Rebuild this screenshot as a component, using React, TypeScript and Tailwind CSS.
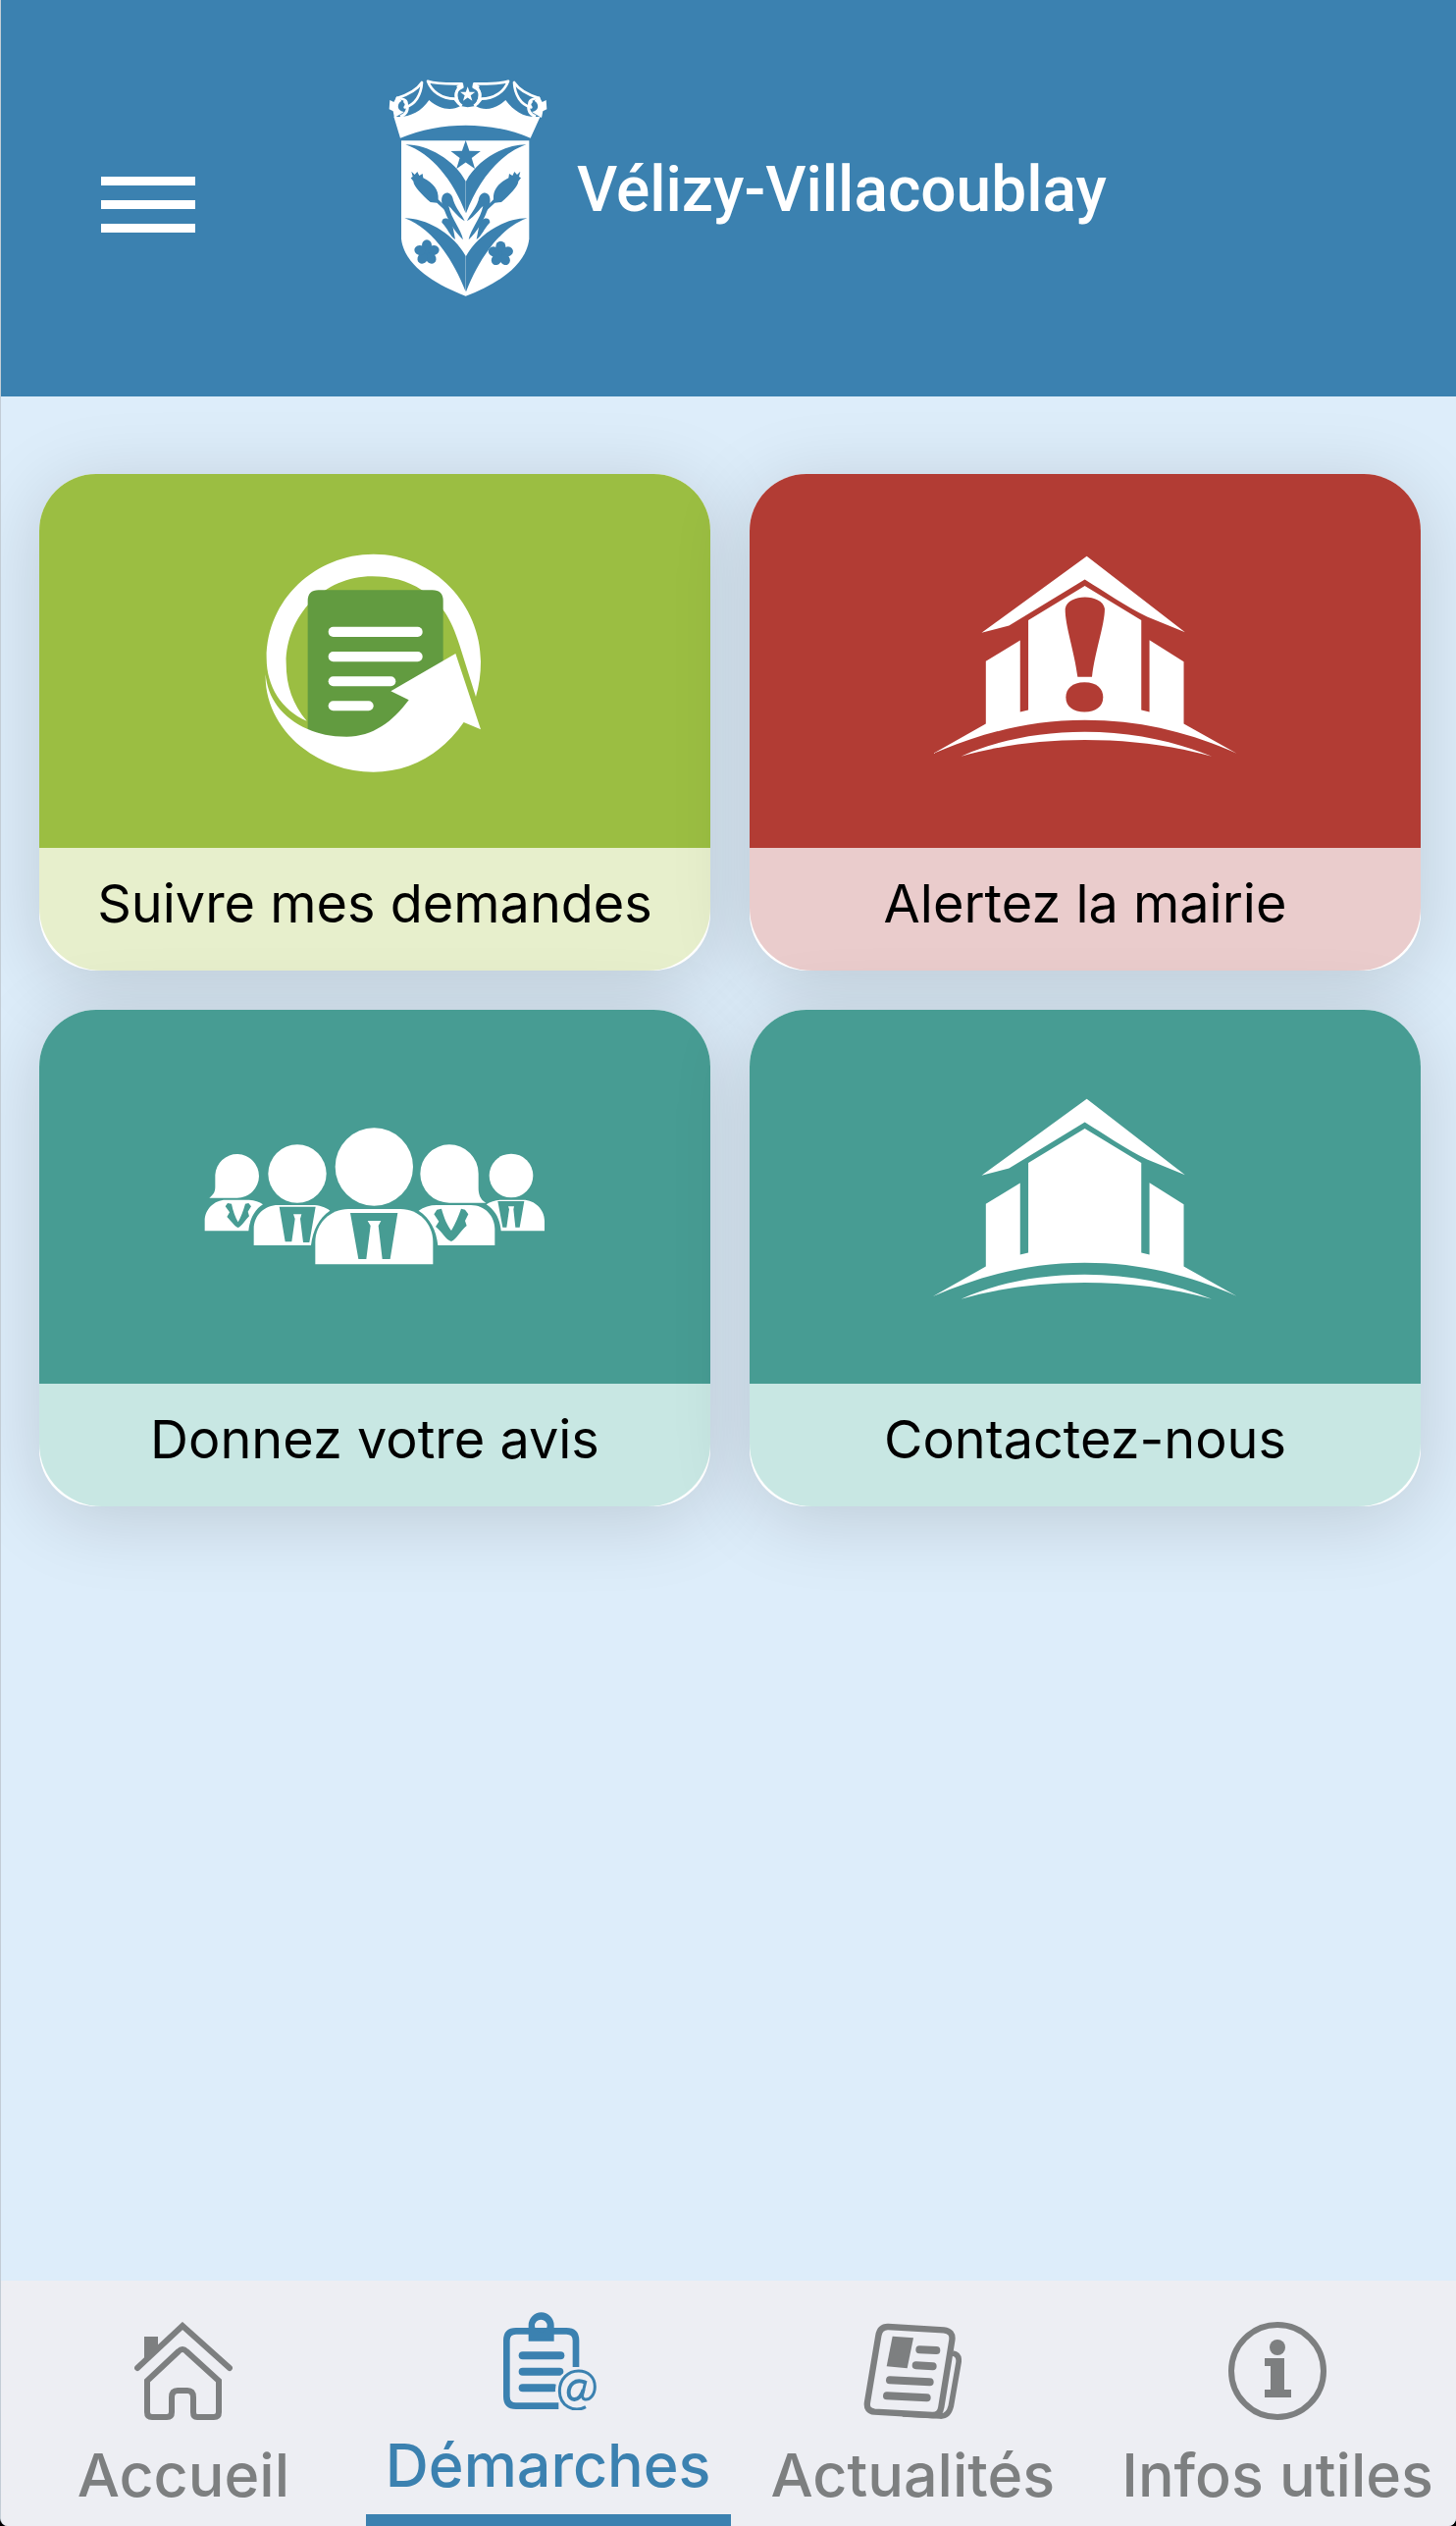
import React from "react";

function CityCrest() {
  const star = (cx: number, cy: number, r: number) =>
    Array.from({ length: 10 }, (_, i) => {
      const a = -Math.PI / 2 + (i * Math.PI) / 5;
      const k = i % 2 ? r * 0.4 : r;
      return `${cx + k * Math.cos(a)},${cy + k * Math.sin(a)}`;
    }).join(" ");
  const petals = [0, 72, 144, 216, 288];
  const half = (
    <>
      <path d="M168 68 C200 78 235 76 272 76 L274 86 C250 96 250 110 262 136 L250 122 C210 122 180 100 168 68Z" fill="none" stroke="white" strokeWidth="8" strokeLinejoin="round" />
      <path d="M272 78 C248 100 250 128 272 144 M272 78 L258 88" fill="none" stroke="white" strokeWidth="9" />
      <path d="M150 72 C148 110 130 140 98 148 C110 132 102 122 74 120 C100 112 135 95 150 72Z" fill="none" stroke="white" strokeWidth="8" strokeLinejoin="round" />
      <path d="M52 126 L64 132 L74 114 L88 128 C70 140 76 160 96 162 L66 180 L62 160 L50 154Z" fill="white" />
      <path d="M96 128 C112 146 108 168 84 176" fill="none" stroke="white" strokeWidth="9" />
    </>
  );
  const plant = (
    <>
      <path d="M100 262 C170 262 250 310 284 374 V472 C245 370 180 290 100 262Z" />
      <path d="M97 487 C170 487 250 540 284 603 V712 C240 600 175 515 97 487Z" />
      <path d="M118 344 L128 354 L136 345 L142 357 L152 351 L154 364 C185 380 202 400 200 430 L228 458 L222 464 L196 440 L176 438 C150 415 125 390 124 374 L116 364 L122 360Z" />
      <path d="M211 440 C205 405 240 398 246 432 C255 460 272 475 281 496 C255 480 240 455 232 450 C240 490 270 520 276 553 C250 525 230 500 211 440Z" />
      <path d="M211 500 C210 482 238 482 244 510 L252 552 C235 540 230 520 211 500Z" />
    </>
  );
  return (
    <svg viewBox="0 0 600 780" className="h-[260px] w-[200px] shrink-0" aria-hidden="true">
      {half}
      <g transform="translate(582 0) scale(-1 1)">{half}</g>
      <polygon points={star(290, 109, 24)} fill="white" />
      <path d="M64 176 C110 180 145 165 172 126 C205 155 240 160 268 144 L290 148 L314 144 C340 160 375 155 406 126 C435 165 470 182 512 176 L482 242 C360 190 210 190 84 242Z" fill="white" />
      <path d="M87 250 H478 V550 C470 630 380 690 284 725 C190 690 95 630 87 550Z" fill="white" />
      <g fill="#3b81b0">
        {plant}
        <g transform="translate(569 0) scale(-1 1)">{plant}</g>
        <polygon points={star(284, 297, 48)} />
        {[{ x: 165, y: 592 }, { x: 391, y: 596 }].map((f) => (
          <g key={f.x} transform={`translate(${f.x} ${f.y})`}>
            <circle r="13" />
            {petals.map((p) => (
              <ellipse key={p} cx="0" cy="-22" rx="15" ry="17" transform={`rotate(${p})`} />
            ))}
          </g>
        ))}
      </g>
    </svg>
  );
}

function FollowIcon() {
  return (
    <svg viewBox="36 40 720 720" className="size-[240px]" aria-hidden="true">
      <path fill="white" d="M188 582 C110 548 65 475 65 390 C65 210 215 72 392 72 C580 72 720 230 720 400 C720 440 715 475 705 508 L655 350 C630 270 600 220 540 182 C495 153 445 140 388 140 C240 140 125 260 125 405 C125 475 145 530 188 582Z" />
      <path fill="#629b40" d="M191 615 V215 Q191 182 224 182 H572 Q605 182 605 215 V405 L510 530 C440 640 300 660 191 615Z" />
      <g fill="white">
        <rect x="254" y="294" width="288" height="31" rx="15" />
        <rect x="254" y="370" width="288" height="31" rx="15" />
        <rect x="254" y="446" width="206" height="30" rx="15" />
        <rect x="254" y="521" width="138" height="30" rx="15" />
        <path d="M62 440 C68 510 110 572 191 607 C225 622 260 630 310 630 C390 630 450 585 500 518 L445 491 L643 376 L720 608 L668 586 C600 685 500 738 392 738 C210 738 58 600 62 440Z" />
      </g>
    </svg>
  );
}

function TownHallIcon({ alert = false }: { alert?: boolean }) {
  return (
    <svg viewBox={alert ? "48 50 960 700" : "48 29 960 700"} className="h-[233px] w-[320px]" aria-hidden="true">
      <g fill="white">
        <path d="M533 79 L834 312 L718 265 C650 232 590 190 527 151 L295 292 L211 314Z" />
        <path d="M527 170 L700 275 V550 L725 556 V336 L830 402 V592 L992 683 C850 620 700 581 527 581 C350 581 200 625 62 684 L224 592 V401 L329 337 V556 L354 550 V275Z" />
        <path d="M148 692 C260 642 390 617 527 617 C670 617 800 645 916 692 C790 658 660 642 527 642 C390 642 260 660 148 692Z" />
      </g>
      {alert && (
        <g fill="#b23c34">
          <path d="M505 449 C495 370 466 290 467 240 C475 193 580 193 588 240 C588 290 558 370 549 449Z" />
          <path d="M526 465 C565 465 583 485 583 511 C583 540 560 556 526 556 C492 556 469 540 469 511 C469 485 488 465 526 465Z" />
        </g>
      )}
    </svg>
  );
}

function PeopleIcon() {
  const c = "#479c93";
  return (
    <svg viewBox="36 73 1080 450" className="h-[150px] w-[360px]" aria-hidden="true">
      <g fill="white">
        <path d="M88 230 A67 67 0 1 1 155 300 H70 C85 288 88 280 88 265Z" />
        <circle cx="339" cy="226" r="89" />
        <circle cx="574" cy="205" r="119" />
        <path d="M893 226 A89 89 0 1 0 805 315 H916 C897 305 893 285 893 270Z" />
        <circle cx="993" cy="232" r="67" />
        <path d="M56 401 V370 C56 335 85 306 120 306 H185 C205 306 222 311 234 320 C210 335 194 362 190 401Z" />
        <path d="M206 445 V395 C206 352 240 322 280 322 H385 C405 322 425 328 439 339 C405 362 387 398 381 445Z" />
        <path d="M394 503 V435 C394 378 440 334 495 334 H655 C710 334 754 378 754 435 V503Z" />
        <path d="M710 339 C725 328 745 322 765 322 H870 C912 322 943 355 943 395 V445 H769 C764 398 745 362 710 339Z" />
        <path d="M917 320 C930 311 945 306 965 306 H1030 C1065 306 1095 335 1095 370 V401 H962 C958 362 944 338 917 320Z" />
      </g>
      <g fill={c}>
        <path d="M501 346 H646 L623 487 H599 L587 385 L595 370 H554 L563 385 L550 487 H526Z" />
        <path d="M284 327 H395 L376 436 H357 L348 364 L352 350 H327 L332 364 L322 434 H302Z" />
        <path d="M952 310 H1033 L1019 390 H1006 L1000 335 L1002 326 H984 L987 335 L979 390 H967Z" />
        <path d="M126 316 L138 318 C142 340 150 360 158 374 C166 360 174 340 180 318 L190 316 L198 326 L188 342 L192 356 C178 370 170 386 158 391 C146 386 138 372 124 358 L132 344 L119 326Z" />
        <path d="M766 336 L780 333 C788 362 798 385 810 400 C822 380 832 355 840 333 L852 336 L862 350 L852 370 L857 385 C838 400 828 424 810 433 C792 428 784 405 762 388 L772 372 L757 350Z" />
      </g>
    </svg>
  );
}

function HomeIcon() {
  return (
    <svg viewBox="0 0 100 100" className="size-[100px]" fill="none" stroke="currentColor" aria-hidden="true">
      <path d="M3 47 L49 4 L97 47" strokeWidth="6" strokeLinecap="round" />
      <path d="M10 15 H24 V26 L10 39Z" fill="currentColor" stroke="none" />
      <path d="M49 28 Q51 28 53 30 L86 60 V92 Q86 97 81 97 H64 Q60 97 60 92 V77 Q60 70 54 70 H44 Q38 70 38 77 V92 Q38 97 33 97 H18 Q13 97 13 92 V60 L45 30 Q47 28 49 28Z" strokeWidth="6" />
    </svg>
  );
}

function ClipboardIcon() {
  return (
    <svg viewBox="84 48 300 300" className="size-[100px]" fill="none" stroke="currentColor" aria-hidden="true">
      <path d="M265 335 H135 Q106 335 106 306 V135 Q106 106 135 106 H289 Q318 106 318 135 V216" strokeWidth="20" />
      <path fillRule="evenodd" fill="currentColor" stroke="none" d="M173 137 V88 A39 39 0 0 1 251 88 V137Z M211 71 A19 19 0 1 0 211 109 A19 19 0 1 0 211 71Z" />
      <g strokeWidth="24" strokeLinecap="round">
        <path d="M155 181 H271" />
        <path d="M155 230 H268" />
        <path d="M155 280 H250" />
      </g>
      <circle cx="321" cy="286" r="66" fill="#edeef3" stroke="none" />
      <path d="M348 338 C310 358 268 332 268 290 C268 252 294 228 326 228 C356 228 376 248 376 276 C376 302 360 317 346 315 C336 313 337 304 339 295 L348 258" strokeWidth="9" />
      <path d="M346 263 C316 250 296 270 296 295 C296 320 328 326 341 285" strokeWidth="12" />
    </svg>
  );
}

function NewsIcon() {
  return (
    <svg viewBox="60 78 300 300" className="size-[100px]" fill="none" stroke="currentColor" aria-hidden="true">
      <path d="M136 93 L306 103 Q335 106 331 134 L298 338 Q294 365 270 363 L94 353 Q68 350 72 324 L106 120 Q111 92 136 93Z" strokeWidth="19" />
      <path d="M333 174 Q355 178 351 203 L328 335 Q320 368 294 366 L180 360" strokeWidth="17" />
      <path d="M149 122 L213 127 L194 220 L131 214Z" fill="currentColor" stroke="none" />
      <g strokeWidth="24" strokeLinecap="round">
        <path d="M232 163 L283 165" />
        <path d="M221 211 L272 214" />
        <path d="M141 256 L263 262" />
        <path d="M132 304 L254 310" />
      </g>
    </svg>
  );
}

function InfoIcon() {
  return (
    <svg viewBox="0 0 100 100" className="size-[100px]" fill="currentColor" aria-hidden="true">
      <circle cx="50" cy="50" r="47" fill="none" stroke="currentColor" strokeWidth="6" />
      <circle cx="50" cy="26" r="8" />
      <path d="M37 37 H57 V69 H64 V77 H37 V69 H43 V45 H37Z" />
    </svg>
  );
}

const tiles = [
  { label: "Suivre mes demandes", top: "bg-[#9bbe42]", bottom: "bg-[#e7efcc]", icon: <FollowIcon /> },
  { label: "Alertez la mairie", top: "bg-[#b23c34]", bottom: "bg-[#eacccc]", icon: <TownHallIcon alert /> },
  { label: "Donnez votre avis", top: "bg-[#479c93]", bottom: "bg-[#c8e7e3]", icon: <PeopleIcon /> },
  { label: "Contactez-nous", top: "bg-[#479c93]", bottom: "bg-[#c8e7e3]", icon: <TownHallIcon /> },
];

const tabs = [
  { label: "Accueil", icon: <HomeIcon />, active: false },
  { label: "Démarches", icon: <ClipboardIcon />, active: true },
  { label: "Actualités", icon: <NewsIcon />, active: false },
  { label: "Infos utiles", icon: <InfoIcon />, active: false },
];

export default function App() {
  return (
    <div className="bg-black font-[Inter,sans-serif]">
      <div className="flex min-h-screen flex-col overflow-hidden rounded-b-lg border-l border-[#c3cdd6] bg-[#ddedfa]">
        <header className="flex items-center bg-[#3b81b0] pt-15 pb-21 pl-[102px]">
          <button type="button" aria-label="Menu" className="mt-9 flex w-24 shrink-0 flex-col gap-[15px]">
            <span className="h-[9px] w-full bg-white" />
            <span className="h-[9px] w-full bg-white" />
            <span className="h-[9px] w-full bg-white" />
          </button>
          <a href="#" className="ml-[181px] flex items-center gap-2 text-white">
            <CityCrest />
            <span className="pt-2 font-[Roboto,sans-serif] text-[64px] font-medium whitespace-nowrap">
              Vélizy-Villacoublay
            </span>
          </a>
        </header>

        <main className="grid flex-1 grid-cols-2 content-start gap-10 pt-[79px] pr-9 pl-[39px]">
          {tiles.map((t) => (
            <button key={t.label} type="button" className="overflow-hidden rounded-[58px] bg-white shadow-[0_12px_80px_rgba(0,0,0,0.15)]">
              <span className={`flex h-[381px] items-center justify-center ${t.top}`}>{t.icon}</span>
              <span className={`block rounded-b-[64px] pt-[26px] pb-[37px] text-[54px] leading-[62px] whitespace-nowrap text-black ${t.bottom}`}>{t.label}</span>
            </button>
          ))}
        </main>

        <nav className="overflow-hidden bg-[#edeef3]">
          <div className="-mr-1 grid grid-cols-4">
            {tabs.map((t) => (
              <a
                key={t.label}
                href="#"
                aria-current={t.active ? "page" : undefined}
                className={`flex flex-col items-center gap-5 ${t.active ? "border-b-12 border-[#3b81b0] pt-8 pb-3.5 text-[#3b81b0]" : "pt-[42px] pb-4 text-[#7d7f80]"}`}
              >
                {t.icon}
                <span className="text-[61px] leading-[72px] font-medium whitespace-nowrap">{t.label}</span>
              </a>
            ))}
          </div>
        </nav>
      </div>
    </div>
  );
}
